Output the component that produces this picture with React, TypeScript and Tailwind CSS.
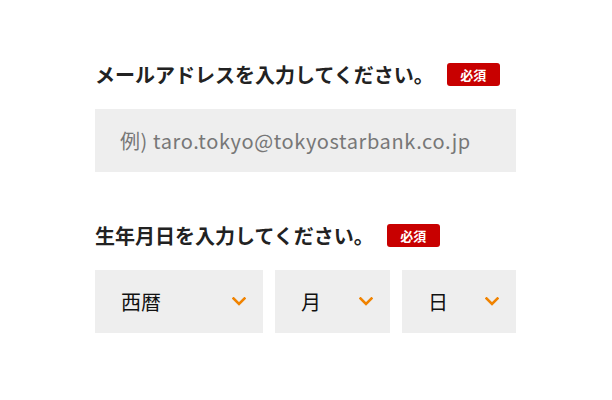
import React from 'react';

const font = { fontFamily: '"Noto Sans CJK JP", "Noto Sans", sans-serif' };

function Badge() {
  return (
    <span className="ml-[13px] inline-flex h-[23px] w-[53px] items-center justify-center rounded-[3px] bg-[#c80000] text-[13px] font-bold leading-none text-white">
      必須
    </span>
  );
}

function Chevron() {
  return (
    <svg width="14" height="9" viewBox="0 0 14 9" fill="none">
      <path d="M1.5 1.5L7 7L12.5 1.5" stroke="#f08300" strokeWidth="2.6" strokeLinecap="square" />
    </svg>
  );
}

function SelectBox({ label, width }: { label: string; width: string }) {
  return (
    <div className={`${width} flex h-[63px] items-center justify-between bg-[#eeeeee] pl-[26px] pr-[17px]`}>
      <span className="text-[20px] leading-none text-[#111]">{label}</span>
      <Chevron />
    </div>
  );
}

export default function App() {
  return (
    <div className="h-[400px] w-[612px] bg-white" style={font}>
      <div className="ml-[95px] w-[421px] pt-[63px]">
        <div className="flex h-[23px] items-center">
          <h2 className="text-[20px] font-bold leading-none text-[#222]">メールアドレスを入力してください。</h2>
          <Badge />
        </div>
        <div className="mt-[23px] flex h-[63px] items-center bg-[#eeeeee] pl-[25px]">
          <span className="text-[20px] leading-none tracking-[0.6px] text-[#777]">
            例) taro.tokyo@tokyostarbank.co.jp
          </span>
        </div>

        <div className="mt-[52px] flex h-[23px] items-center">
          <h2 className="text-[20px] font-bold leading-none text-[#222]">生年月日を入力してください。</h2>
          <Badge />
        </div>
        <div className="mt-[23px] flex gap-[12px]">
          <SelectBox label="西暦" width="w-[168px]" />
          <SelectBox label="月" width="w-[115px]" />
          <SelectBox label="日" width="w-[114px]" />
        </div>
      </div>
    </div>
  );
}
